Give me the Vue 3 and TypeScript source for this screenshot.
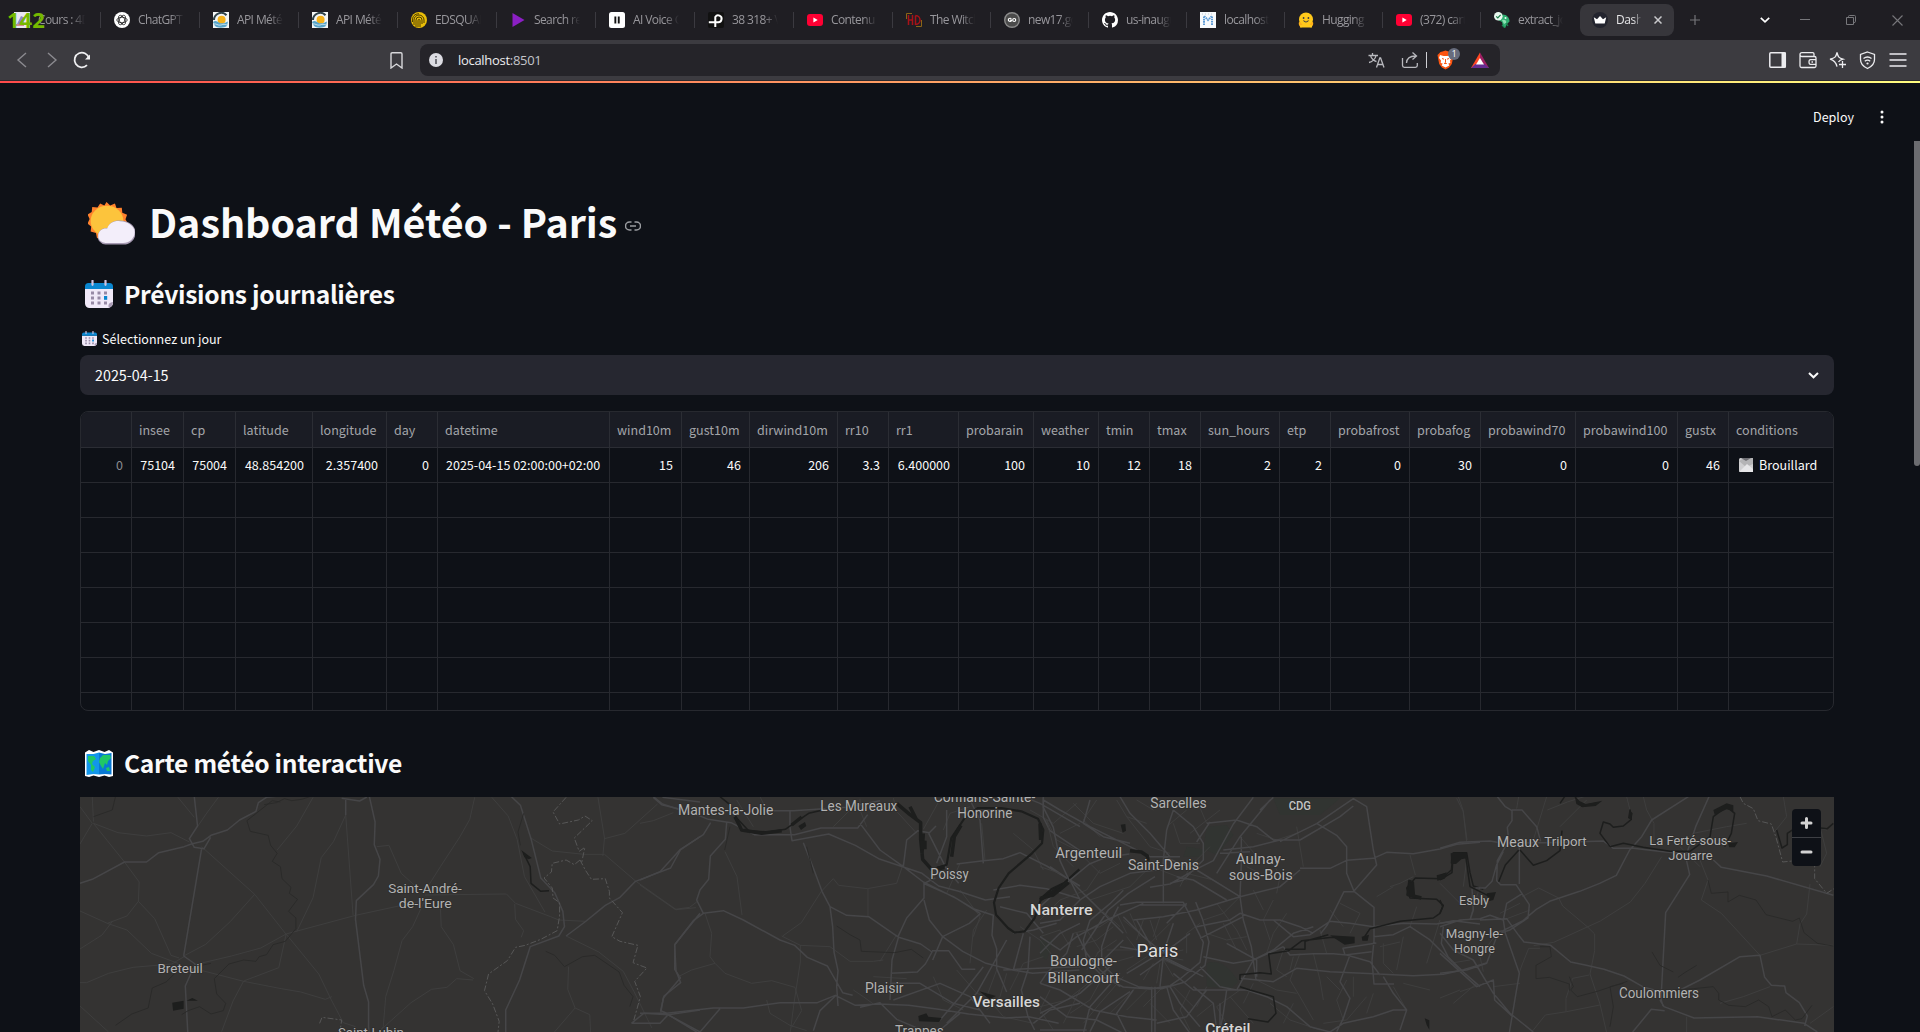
<script setup lang="ts">
interface Tab { icon: string; label: string; w: number }
const tabs: Tab[] = [
  { icon: 'cours', label: 'Cours : 4D', w: 101 },
  { icon: 'gpt', label: 'ChatGPT - ', w: 99 },
  { icon: 'meteo', label: 'API Météo', w: 99 },
  { icon: 'meteo', label: 'API Météo', w: 99 },
  { icon: 'eds', label: 'EDSQUARE', w: 99 },
  { icon: 'play', label: 'Search res', w: 99 },
  { icon: 'eleven', label: 'AI Voice G', w: 99 },
  { icon: 'pexels', label: '38 318+ Vi', w: 99 },
  { icon: 'yt', label: 'Contenu d', w: 99 },
  { icon: 'hd', label: 'The Witche', w: 98 },
  { icon: 'go', label: 'new17.go', w: 98 },
  { icon: 'github', label: 'us-inaugu', w: 98 },
  { icon: 'm', label: 'localhost', w: 98 },
  { icon: 'hug', label: 'Hugging F', w: 98 },
  { icon: 'yt', label: '(372) cart', w: 98 },
  { icon: 'parrot', label: 'extract_jo', w: 98 },
]

interface Col { name: string; value: string; w: number }
const cols: Col[] = [
  { name: '', value: '0', w: 51 },
  { name: 'insee', value: '75104', w: 52 },
  { name: 'cp', value: '75004', w: 52 },
  { name: 'latitude', value: '48.854200', w: 77 },
  { name: 'longitude', value: '2.357400', w: 74 },
  { name: 'day', value: '0', w: 51 },
  { name: 'datetime', value: '2025-04-15 02:00:00+02:00', w: 172 },
  { name: 'wind10m', value: '15', w: 72 },
  { name: 'gust10m', value: '46', w: 68 },
  { name: 'dirwind10m', value: '206', w: 88 },
  { name: 'rr10', value: '3.3', w: 51 },
  { name: 'rr1', value: '6.400000', w: 70 },
  { name: 'probarain', value: '100', w: 75 },
  { name: 'weather', value: '10', w: 65 },
  { name: 'tmin', value: '12', w: 51 },
  { name: 'tmax', value: '18', w: 51 },
  { name: 'sun_hours', value: '2', w: 79 },
  { name: 'etp', value: '2', w: 51 },
  { name: 'probafrost', value: '0', w: 79 },
  { name: 'probafog', value: '30', w: 71 },
  { name: 'probawind70', value: '0', w: 95 },
  { name: 'probawind100', value: '0', w: 102 },
  { name: 'gustx', value: '46', w: 51 },
  { name: 'conditions', value: 'Brouillard', w: 104 },
]
const emptyRows = 7

interface Place { t: string; x: number; y: number; w: number; k?: string }
const places: Place[] = [
  { t: 'Saint-André-', x: 388.2, y: 893.3, w: 73.5, k: 'small' },
  { t: "de-l'Eure", x: 398.8, y: 907.7, w: 53, k: 'small' },
  { t: 'Breteuil', x: 157.5, y: 972.7, w: 45.4, k: 'small' },
  { t: 'Saint-Lubin', x: 338, y: 1036.5, w: 65.7, k: 'small' },
  { t: 'Mantes-la-Jolie', x: 678, y: 814.7, w: 95.3 },
  { t: 'Les Mureaux', x: 820.3, y: 811, w: 77 },
  { t: 'Conflans-Sainte-', x: 933.7, y: 802, w: 101.6 },
  { t: 'Honorine', x: 957.3, y: 817.7, w: 55 },
  { t: 'Poissy', x: 930.3, y: 879, w: 38.4 },
  { t: 'Argenteuil', x: 1055.2, y: 858, w: 67 },
  { t: 'Nanterre', x: 1030, y: 915, w: 62.7, k: 'strong' },
  { t: 'Boulogne-', x: 1050, y: 965.7, w: 67 },
  { t: 'Billancourt', x: 1047.5, y: 982.7, w: 72 },
  { t: 'Plaisir', x: 865, y: 992.7, w: 38.6 },
  { t: 'Versailles', x: 972.5, y: 1007.3, w: 67.3, k: 'strong' },
  { t: 'Trappes', x: 895, y: 1035.5, w: 48.7 },
  { t: 'Créteil', x: 1205.2, y: 1034, w: 45.3, k: 'strong' },
  { t: 'Sarcelles', x: 1150.3, y: 807.7, w: 56.4 },
  { t: 'CDG', x: 1288.7, y: 810.3, w: 22.3, k: 'code' },
  { t: 'Saint-Denis', x: 1128, y: 870.3, w: 71 },
  { t: 'Aulnay-', x: 1235.7, y: 863.7, w: 49.3 },
  { t: 'sous-Bois', x: 1228.7, y: 880.3, w: 64 },
  { t: 'Paris', x: 1136.4, y: 956.5, w: 42, k: 'capital' },
  { t: 'Meaux', x: 1497, y: 846.7, w: 41.9 },
  { t: 'Trilport', x: 1544.3, y: 846, w: 42.4, k: 'small' },
  { t: 'La Ferté-sous-', x: 1649.3, y: 845.3, w: 81.7, k: 'small' },
  { t: 'Jouarre', x: 1668.3, y: 860, w: 44.4, k: 'small' },
  { t: 'Esbly', x: 1459, y: 905, w: 30, k: 'small' },
  { t: 'Magny-le-', x: 1445.7, y: 938.3, w: 57.3, k: 'small' },
  { t: 'Hongre', x: 1454, y: 952.5, w: 41, k: 'small' },
  { t: 'Coulommiers', x: 1619, y: 998, w: 80 },
]
</script>

<template>
  <div class="window">
    <svg class="defs" width="0" height="0" aria-hidden="true">
      <symbol id="fav-cours" viewBox="0 0 16 16"><rect width="16" height="16" fill="#e9e6f3" /><path d="M3 12 7 4l4 2-2 7z" fill="#8f86c9" /><path d="M2 13h8" stroke="#c0392b" stroke-width="1" /></symbol>
      <symbol id="fav-gpt" viewBox="0 0 16 16"><circle cx="8" cy="8" r="8" fill="#fff" /><g fill="none" stroke="#222" stroke-width=".8"><ellipse cx="8" cy="8" rx="5.200" ry="2.700" /><ellipse cx="8" cy="8" rx="5.200" ry="2.700" transform="rotate(60 8 8)" /><ellipse cx="8" cy="8" rx="5.200" ry="2.700" transform="rotate(120 8 8)" /></g></symbol>
      <symbol id="fav-meteo" viewBox="0 0 16 16"><rect width="16" height="16" fill="#f4f6f5" /><path d="M1 8A7.2 7.2 0 0 1 13.5 3.2" fill="none" stroke="#30434a" stroke-width="2" /><circle cx="8.6" cy="7.8" r="4" fill="#f6b21b" /><path d="M0 10c2-2 4-1 6 .5s5 1 9-1L14 14c-3 2-9 2.500-12 0z" fill="#58a4c8" /><path d="M0 12c3-1 5 2 8 1s3-1 6 0" stroke="#d8ecf4" stroke-width=".8" fill="none" /></symbol>
      <symbol id="fav-eds" viewBox="0 0 16 16"><circle cx="8" cy="8" r="8" fill="#e9be08" /><g fill="none" stroke="#4a3b00" stroke-width="1"><path d="M3 13V8a5 5 0 0 1 10 0v3M5 15V8a3 3 0 0 1 6 0v4M7 15V8.500a1 1 0 0 1 2 0V15M1.500 10C.8 4 4 1.800 8 1.800" /></g></symbol>
      <symbol id="fav-play" viewBox="0 0 16 16"><path d="M2.500 1 14.500 8 2.500 15z" fill="#8b1fc4" /></symbol>
      <symbol id="fav-eleven" viewBox="0 0 16 16"><rect width="16" height="16" rx="2.500" fill="#fff" /><path d="M5.400 4.500h1.900v7H5.400zM8.800 4.500h1.900v7H8.800z" fill="#111" /></symbol>
      <symbol id="fav-pexels" viewBox="0 0 16 16"><rect width="16" height="16" rx="2" fill="#111" /><path d="M7.300 15V5a3.400 3.400 0 1 1 2.500 5.200H.8" fill="none" stroke="#fff" stroke-width="2" /></symbol>
      <symbol id="fav-yt" viewBox="0 0 16 16"><rect y="2" width="16" height="12" rx="3" fill="#ff0033" /><path d="m6.400 5.600 4.300 2.400-4.300 2.400z" fill="#fff" /></symbol>
      <symbol id="fav-hd" viewBox="0 0 16 16"><path d="M.5 7V1.500H6M15.500 8v6.500H10" fill="none" stroke="#8c6416" stroke-width="1" /><path d="M2.500 3v10M6.500 3v10M2.500 8h4M9.500 3.500v9.500M9.500 3.500c6 0 6 9 0 9" fill="none" stroke="#a81218" stroke-width="1.500" /></symbol>
      <symbol id="fav-go" viewBox="0 0 16 16"><circle cx="8" cy="8" r="8" fill="#8c8c8c" /><circle cx="8" cy="8" r="6.600" fill="#4b4b4b" /><g fill="none" stroke="#fff" stroke-width="1.200"><path d="M7.300 6.900A1.600 1.600 0 1 0 7.400 8.600V8.200H6.200" /><circle cx="10.200" cy="8" r="1.500" /></g></symbol>
      <symbol id="fav-github" viewBox="0 0 16 16"><path fill="#fff" d="M8 0C3.580 0 0 3.580 0 8c0 3.540 2.290 6.530 5.470 7.590.4.070.55-.17.55-.38 0-.19-.01-.82-.01-1.490-2.010.37-2.530-.49-2.690-.94-.09-.23-.48-.94-.82-1.130-.28-.15-.68-.52-.01-.53.63-.01 1.080.58 1.230.82.72 1.210 1.870.87 2.330.66.07-.52.28-.87.51-1.070-1.780-.2-3.640-.89-3.640-3.950 0-.87.31-1.590.82-2.150-.08-.2-.36-1.020.08-2.120 0 0 .67-.21 2.200.82a7.600 7.600 0 0 1 4 0c1.530-1.040 2.200-.82 2.200-.82.44 1.100.16 1.920.08 2.120.51.56.82 1.270.82 2.150 0 3.070-1.870 3.750-3.650 3.950.29.25.54.73.54 1.480 0 1.070-.01 1.930-.01 2.200 0 .21.15.46.55.38A8 8 0 0 0 16 8c0-4.420-3.580-8-8-8z" /></symbol>
      <symbol id="fav-m" viewBox="0 0 16 16"><rect width="16" height="16" fill="#f8fafc" /><path d="M4 13V4l4 4 4-4v9" fill="none" stroke="#5d9bd6" stroke-width="2" stroke-dasharray="1.600 .7" /><path d="M2 2h12" stroke="#c3ccd6" stroke-dasharray="1 2" /></symbol>
      <symbol id="fav-hug" viewBox="0 0 16 16"><circle cx="8" cy="7.500" r="7" fill="#ffc91b" /><path d="M1 10c2 0 3 2 4 4.500L3 15.500C1 14 .3 12 1 10zM15 10c-2 0-3 2-4 4.500l2 1c2-1.500 2.700-3.500 2-5.500z" fill="#ffb01a" /><path d="M2 13h12v2.500H2z" fill="#ffc91b" /><circle cx="5.600" cy="6" r=".9" fill="#3a3b45" /><circle cx="10.400" cy="6" r=".9" fill="#3a3b45" /><path d="M5.500 8.500q2.500 3 5 0" fill="none" stroke="#3a3b45" stroke-width="1.100" /></symbol>
      <symbol id="fav-parrot" viewBox="0 0 16 16"><path d="M6 3c5-2 10 2 9.500 6.500L13 12l-2 4-2-2-1-4-4-2z" fill="#2fae71" /><path d="M8 8c3-1 5 1 4 3l-2 1z" fill="#8ce0b3" /><circle cx="11.500" cy="6" r="1" fill="#eafff3" /><path d="m8 13 3 3M12 11l2 3" stroke="#1d8a55" stroke-width="1.200" /><circle cx="4.300" cy="4.300" r="4.300" fill="#e8f8ef" /><path d="m2.200 4.400 1.600 1.500 2.800-3" fill="none" stroke="#1b7a47" stroke-width="1.300" /></symbol>
      <symbol id="calendar" viewBox="0 0 28 28"><path d="M0 9h28v14a5 5 0 0 1-1 3l-3 2H4.500A4.500 4.500 0 0 1 0 23.500z" fill="#f0e9f8" /><path d="M24 28c-1.500-3 0-5.500 4-6-.3 3-1.500 5-4 6z" fill="#a99bb5" /><path d="M0 9V6.500A3.500 3.500 0 0 1 3.500 3h21A3.500 3.500 0 0 1 28 6.500V9z" fill="#0a86cf" /><path d="M7.500.8v4M20.500.8v4" stroke="#d0c3df" stroke-width="2.200" stroke-linecap="round" /><g fill="#978aa6"><path d="M6 11.500h3v3H6zM12.500 11.500h3v3h-3zM19 11.500h3v3h-3zM6 16.500h3v3H6zM12.500 16.500h3v3h-3zM6 21.500h3v3H6zM12.500 21.500h3v3h-3zM19 21.500h3v3h-3z" /></g><path d="M19 16h3.200v3.800H19z" fill="#0a86cf" /></symbol>
      <linearGradient id="bat" x1="0" y1="0" x2="1" y2="0"><stop offset=".5" stop-color="#ff4724" /><stop offset=".5" stop-color="#9e1f63" /></linearGradient>
    </svg>

    <header class="tabbar">
      <div v-for="(t, i) in tabs" :key="i" class="tab" :style="{ width: t.w + 'px' }">
        <svg class="fav"><use :href="'#fav-' + t.icon" /></svg>
        <span class="tab-label">{{ t.label }}</span>
      </div>
      <div class="tab active">
        <svg class="fav" viewBox="0 0 16 16"><circle cx="8" cy="8" r="8" fill="#23242e" /><path d="m1.800 5.200 3.200 2L8 4l3 3.200 3.200-2-1.500 6.300H3.300z" fill="#fff" /></svg>
        <span class="tab-label">Dashb</span>
        <svg class="x" viewBox="0 0 8 8"><path d="m.5.5 7 7m0-7-7 7" stroke="#c9c9cc" stroke-width="1.500" /></svg>
      </div>
      <svg class="plus" viewBox="0 0 10 10"><path d="M5 0v10M0 5h10" stroke="#747478" stroke-width="1.200" /></svg>
      <div class="winctl">
        <svg class="more" width="10" height="6" viewBox="0 0 10 6"><path d="m.8.800 4.200 4 4.200-4" fill="none" stroke="#fff" stroke-width="1.700" /></svg>
        <svg width="10" height="10" viewBox="0 0 10 10"><path d="M0 4.500h10" stroke="#77777b" /></svg>
        <svg width="10" height="10" viewBox="0 0 10 10"><path d="M.5 2.500h7v7h-7zM2.500 2.200V1.500q0-1 1-1h5q1 0 1 1v5q0 1-1.500 1" fill="none" stroke="#77777b" /></svg>
        <svg width="11" height="11" viewBox="0 0 11 11"><path d="m.5.5 10 10m0-10-10 10" stroke="#77777b" stroke-width="1.100" /></svg>
      </div>
      <span class="fps">142</span>
    </header>

    <nav class="toolbar">
      <svg class="nav-l" width="90" height="20" viewBox="0 0 90 20" fill="none">
        <path d="M26 3l-8 7 8 7" stroke="#8b8a8f" stroke-width="1.400" />
        <path d="m48 3 8 7-8 7" stroke="#8b8a8f" stroke-width="1.400" />
        <path d="M87 15.200A7.300 7.300 0 1 1 89 8.500" stroke="#f0f0f2" stroke-width="1.800" />
        <path d="M90 4.500v5h-5z" fill="#f0f0f2" />
      </svg>
      <svg class="bookmark" width="13" height="17" viewBox="0 0 13 17"><path d="M1 2q0-1.200 1.200-1.200h8.600Q12 .8 12 2v14l-5.500-4L1 16z" fill="none" stroke="#d8d8db" stroke-width="1.400" /></svg>
      <div class="address">
        <svg class="info" width="14" height="14" viewBox="0 0 14 14"><circle cx="7" cy="7" r="7" fill="#dcdce2" /><path d="M6.200 3h1.600v1.600H6.200zM6.200 6h1.600v5H6.200z" fill="#55555c" /></svg>
        <span class="url">localhost<i>:8501</i></span>
        <svg class="addr-icons" width="132" height="24" viewBox="0 0 132 24" fill="none" stroke-width="1.300">
          <g stroke="#b9b9be"><path d="M4.500 5v2.500M.5 7.500h9.500M2.500 7.500c.5 3 4 5.500 6 6M8 7.500C7.500 11 4 14 1 14.500M8.500 19.500l3.300-9.500h.8l3.400 9.500M9.700 16.500h5.200" /><path d="M34.500 10v7.500q0 1.800 1.800 1.800h11.200q1.800 0 1.800-1.800V15M38.500 15c.3-4.700 3-7 9-7M44.500 4.500l4 3.500-4 3.500" /></g>
          <path d="M58.500 4v16" stroke="#d0d0d4" stroke-width="1" />
          <path d="m72.500 4 2-.5 3-1 3 1 2 .5 3 3-.7 4-1 5-2.700 3.500-3.600 2-3.600-2-2.700-3.500-1-5-.7-4z" fill="#fb5410" />
          <path d="m72 7 3.500 1h4L83 7l1 3-2 2.500.3 2.500-2 .5 1 2-3.800 2-3.800-2 1-2-2-.5.300-2.500-2-2.500z" fill="#fff" /><path d="m74 10.500 2 .7M81 10.500l-2 .7M77.500 11v3.500l-1.300 1h2.600" stroke="#fb5410" stroke-width="1" />
          <rect x="80" y="0" width="12" height="12" rx="6" fill="#676c7c" /><text x="83.800" y="9.200" fill="#fff" stroke="none" font-size="8.500" font-family="Open Sans, sans-serif">1</text>
          <path d="m112 4.500 9 15.500h-18z" fill="url(#bat)" /><path d="m103 20 4.500-4h9l4.500 4z" fill="#662d91" /><path d="m112 10 4 6.500h-8z" fill="#fff" />
        </svg>
      </div>
      <svg class="nav-r" width="140" height="20" viewBox="0 0 140 20" fill="none" stroke="#ececef" stroke-width="1.500">
        <rect x="1.800" y="2.800" width="15.500" height="14.500" rx="1" /><path d="M13.500 2.500h4.500v15h-4.500z" fill="#ececef" stroke="none" />
        <path d="M46 6.500V4q0-1.300-1.300-1.300H34q-2 0-2 1.900t2 1.900h12.500q1.500 0 1.500 1.500v8q0 1.500-1.500 1.500H33.500Q32 17.500 32 16V4.500M48 9.700h-5.500q-1.500 0-1.500 2.300t1.500 2.300H48" stroke-width="1.300" /><path d="M43.500 12h1.500" />
        <path d="M69 2.500c1 4.300 2 5.700 6 6.700-2 .6-3.500 1.200-4.500 2.800M69 2.500c-1 4.300-2 5.700-7 6.700 4 1 6 3 7 7.500M74.500 11v7M71 14.500h7" stroke-width="1.300" />
        <path d="m99.500 2 7 2.500v5c0 4-2.500 7-7 9-4.500-2-7-5-7-9v-5z" stroke-width="1.300" /><path d="M95.500 8.500q4-3 8 0M96.800 11.200q2.700-2.200 5.400 0" stroke-width="1.300" /><circle cx="99.500" cy="13.500" r="1.100" fill="#ececef" stroke="none" />
        <path d="M121.500 4h17M121.500 10h17M121.500 16h17" stroke-width="1.400" />
      </svg>
    </nav>
    <div class="decoration"></div>

    <main class="page">
      <div class="topbar">
        <span>Deploy</span>
        <svg width="4" height="14" viewBox="0 0 4 14" fill="#fafafa"><circle cx="2" cy="2" r="1.500" /><circle cx="2" cy="7" r="1.500" /><circle cx="2" cy="12" r="1.500" /></svg>
      </div>
      <div class="scroll"></div>

      <h1>
        <svg class="sun" width="47" height="43" viewBox="1.500 0 44.500 43" preserveAspectRatio="none"><path d="M19 0l3.500 3.500L27 1.500l1.500 4.500 5-.2.500 5 4.500 2-1.500 4.500 2 4-20 17-7-1.500-2-.8-1-5-5-1.500.5-5-3.500-3 2-4.500L1 12.500l4-2.500.5-5 5 .5L13 1.500l4 2z" fill="#ff822d" /><ellipse cx="19.500" cy="19" rx="15.500" ry="15.200" fill="#fcc43c" /><path d="M18 42.500a7.500 7.500 0 0 1-7-9c.7-5 4-8 9-7.500 2-6 7-8 12-7.500 8 .5 14.500 5 14.500 12s-5 12-11 12z" fill="#a79bb3" /><path d="M18 41a7 7 0 0 1-6.800-8c.7-4.500 4-7 8.500-6.500 2-6 7-7.800 12-7.300 8 .5 14 5 14 11s-5 10.800-11 10.800z" fill="#f3eefa" /></svg>
        <span>Dashboard Météo - Paris</span>
        <svg class="link" width="16" height="10" viewBox="0 0 16 10" fill="none" stroke="#9b9da1" stroke-width="1.500"><path d="M6.500 1H4.500a3.700 3.700 0 0 0 0 8h2M9.500 1h2a3.700 3.700 0 0 1 0 8h-2M5 5h6" /></svg>
      </h1>
      <h3 class="h-prev">
        <svg width="28" height="28"><use href="#calendar" /></svg>
        <span>Prévisions journalières</span>
      </h3>
      <label class="field">
        <svg width="15" height="15" viewBox="0 0 28 28"><use href="#calendar" width="28" height="28" /></svg>
        <span>Sélectionnez un jour</span>
      </label>
      <div class="select">
        <span>2025-04-15</span>
        <svg width="11" height="7" viewBox="0 0 11 7"><path d="m1 1 4.500 4.300L10 1" fill="none" stroke="#fafafa" stroke-width="2" /></svg>
      </div>

      <div class="table">
        <div class="row head">
          <div v-for="(c, i) in cols" :key="i" class="cell" :style="{ width: c.w + 'px' }">{{ c.name }}</div>
        </div>
        <div class="row data">
          <div v-for="(c, i) in cols" :key="i" class="cell" :class="{ idx: i === 0, txt: c.name === 'conditions' || c.name === 'datetime' }" :style="{ width: c.w + 'px' }">
            <svg v-if="c.name === 'conditions'" width="14" height="14" viewBox="0 0 14 14"><rect width="14" height="14" rx="1.500" fill="#cfcfd1" /><path d="M0 3 5 0h9v6L7 9z" fill="#b4b4b6" /><path d="m2 0 5 3 5-3z" fill="#6f6f74" /><path d="m0 14 8-8 6 5v3z" fill="#e6e6e8" /></svg>
            {{ c.value }}
          </div>
        </div>
        <div v-for="r in emptyRows" :key="r" class="row">
          <div v-for="(c, i) in cols" :key="i" class="cell" :style="{ width: c.w + 'px' }"></div>
        </div>
      </div>

      <h3 class="h-map">
        <svg width="28" height="27" viewBox="0 0 28 27"><path d="M0 2.500 4 0l4.500 2 5.500-2 5.500 2L24 0l4 2.500V26l-4 1-4.500-1.500L14 27l-5.500-1.500L4 27l-4-1z" fill="#fff" /><path d="M1.500 4 8.500 4v20l-7 1zM8.500 4 14 2.500v22L8.500 24z" fill="#1296ea" /><path d="M14 2.500 20 4v20l-6 .5zM20 4l6.500-1v21.500L20 24z" fill="#0879d4" /><path d="M3 6h6l2 3-3 2-1 3 3 3-2 5-2-2v-5L3 11zM15 8l3-3h7l1 3-3 3-1 4-2-2-2 6-2-3-2-4zM21 18l3-1 1 4h-3z" fill="#1fc766" /></svg>
        <span>Carte météo interactive</span>
      </h3>

      <div class="map">
        <svg class="tiles" viewBox="80 797 1754 235" fill="none">
          <g class="parks" transform="translate(1040 790) scale(.33333)">
            <path d="M500 520q50-20 95 55l-20 20-75-5zM500 110l60-5 20 30-50 60-40-20zM700 25h200l-60 50h-120zM440 170l60 10-20 20h-50zM0 450l40 0-20 60-20-10z" />
          </g>
          <g class="west" transform="translate(60 680) scale(.40816 .33333)">
            <g class="minor">
              <path d="M49 380l30 50-30 62M79 350l3 75M82 430l60 28 70 10 60-10 45 28M82 430l34 52 42 64M158 546l36 60-2 58-28 44-48 22-67-37M192 664l40 52 40 110 20 8M116 730l48 20 60 70 65 30M49 807l54-42 26-42M49 908h16l54-28 60-18 95-10 30-22M289 352l40 60M388 352l-30 50-20 36M347 500l130 143 77 120M477 643l-60 82-60 68-54 35M330 854l90-26 72-24 62-42M554 762l40 60 40 60 30 76M554 762l170-56 170-45M664 958l30 70 30 12M450 903l86-40 18-100M330 866l120 38 92 22 48 10 60 22 16-8M450 903l-26 60-28 92M49 978l70 78M620 352l-40 86-48 72M700 405l-30 80-30 48-20 120-40 102M700 405l18 300M776 500l30-4 30 84 40 44M1016 352l-12 66-24 52-48 90-34 66M894 645l200-3 22 28 86 40M894 660l-30 80-26 42-20 90-20 78-6 90-28 50M932 680l2 60 30 54 16 78 34 24M780 1056l80-88 50-40 38-6 24-26 40 4M1058 352l40 56 22 70 18 112 50 106M1318 352l16 122-4 54M1334 476l50-16 80-88M1152 473l54 40 78 10 50 0 76 80M1410 603l100 86 48-6M1240 768l80 48 60 58 26 60 44 110M1246 860l-2 68 18 56-52 74M1262 984l36 20 2 52M1114 672l2 46 20 34-6 20M1202 710l20 10 66 4"/>
            </g>
            <g class="major">
              <path d="M49 610l30-12 79-52h54l30-28 62-18 18-8 28-8 20-18 40-16 30-30 40-26 6-26 20-16 30-4M329 350l8 88-20 38 12 26 24 4 16-34M347 506l-44 322M303 828l28 24-24 66 6 138M690 355l44 8 18-12M700 360v45M758 350l14 76-2 68 14 44-4 50-12 26-42 48-2 56 20 198 12 50v74l4 50M1106 350l22 26 26 100 24 118 34 44 20 56 4 46-14 28-70 32-26 100-34 90v68M1568 470l-48 40-24 54-86 40-38 48-36 24-50 50-46 42M1568 700l-62 94v74l14 26-42 60-6 44M1568 990l-78 14-60-4-30 30M1490 1004l-20 26h-70M1490 1004l70 52M1454 350l22 22 80 32M1476 352l92 14"/>
            </g>
            <g class="stream">
              <path d="M540 366l-20-4-62 60 8 32 44 12 6 30 16 24-12 24 20 16 4 36 22 26-4 18 20 18-22 36 18 20 0 32-26 38-30 10-16 30-18 6-8 14-30-4-36 12-36 44 6 46 22 28-6 22-30 10-28-22-28 12-16 12M370 850l-80 20-30 36-34 18-10 60-40 18-40 34M136 350l-8 40-46 20M1190 814l22 12 24 34 44-30 30-4 60 50 12 40 22 34-8 30M1136 400l-14 56 6 40"/>
              <path class="bank" d="M500 374l30-6 20-12 18 6 24-4 20-8"/>
            </g>
            <g class="limit"><path d="M1240 352l-16 22-16 22 16 36 46-12 16-12 18 14-44 52 12 40 14-12-8 46M1274 540l-14 14-20-14-34 10-2 26-18 18 20 30 2 30 16 14 0 40-6 44-40 26-38 18-24 6-20 40-46 40-10 50 20 40 16 52-4 44M1274 540l14 32 14 26 34-2 10 38 0 20 32 44-26 72 20 14 44 12-12 52 34 16-30 40 14 46-16 70M636 1030l6-18 48 8-4 36"/></g>
            <path class="waterfill" d="M1130 510l26 24-8 4-10-6zM275 968l28-6 0 24-26 6zM310 962l14-8 14 8-12 0z"/>
            <path class="water" d="M1136 520l16 40 2 50 24 24 20-2"/>
          </g>
          <g transform="translate(640 790) scale(.33333)">
            <g class="minor">
              <path d="M0 100l40-8 60-24M0 285l105 73 44-6 26-20M255 185l36 75 15 115M195 370l20 60-5 70 15 20-70 20-40 20M225 520l30 30 80 30 60-8 70 20 20 70-30 50M425 438l56 28v50l-20 130-10 80M428 438l56-40 60-94 36-38 16 20 86 10 88-16 20-60M684 296v84M480 466l90 4 60 44h70l30-4M720 514l50-80M640 600l30 20 30 22M380 630l10 40 60 36 50 16M700 560l100 6M960 300l60 80-20 60M960 220l-40 90M830 130l-60-66-10-40M900 28l-50 90M910 120l20-50 60-20M1040 360l-40 60-10 100M1070 540l-30 80 50 60 90 20M1210 500l-60 20-40 80M1120 130l60 50 30 60M1220 90l30 60 60 30M1170 60l70 40 70-60M950 540l60 70 60 20M880 560l30 70 60 30M1230 600l-30 60 40 60M1140 410l60 40 40 50M1200 440l60-20 30 50M1100 550l-20 70-40 40M290 30l50 80M360 20l20 40M680 110l-20-50 0-34M1025 100l10 110M580 110l50-50"/>
            </g>
            <g class="major">
              <path d="M40 22l25 22 80 20 60 24 68 10 70 36h120l80-20h110l30-40M0 270l60-25 60-66 70-45 22-36M260 98l-4 50-45 50-5 70-26 32-10 30 20 40 60-8 60 28 110 60 44 16 38 36 60 26 46 80 30 8M190 370l-30 22-56 72 4 78 14 36-50 40-10 44 30 12M0 670h80l140-16h90l110-16 112 0 54-22 60 30 70-4 90 4 90 12 90 14 110 12 70-4 90 20M80 672l100 54M180 726l60-70M586 618l-46 44-20 60M660 652l60-14 50 50 90 38M380 62h80l160-10 100-20M450 62v50l6 40 110-20 80 34 70 40 130 44 50 38 60 16 80 26 74-10M490 158l30 76 26 70 24 46 8 60 4 76 12 56-4 46 4 60M570 350l50 26 66 4 90 62 66 20 34 24-20 36-24 24-80 4M776 440l-20 70-6 120M774 440l26-56 52-60V280l34-16M852 330l16 60 40 50-30 70M908 440l80-40 34-30M908 440l60 44 70 36 80 20 60 10 140-10M876 482l50 0 40 56h40M660 100l60 80 70 50 60 46 100 50 70 44M790 230l10-80 34-28 34 6 20-20M866 130l50 100 40 50M920 60l0 80-30 80M950 222l80-10 60-6 50-18 80 40 100 60M990 30l30 60 10 130M1210 22v60l20 40 90 60M1150 20l50 20 120 70M850 280l90 40 60 36 60 20-4 60 14 40 0 60 30 70M1060 300l80-14 80 10 100 30M1080 350l80 20 50 60M1120 430l60-10 70-20M1150 430l-30 110M1170 440l-6 100-20 60 20 80 20 40M1320 530l-110 4-120 6M1320 400l-60 30-60 60M760 630l140-50 90 40 60 80M750 580l90 0 100 60 80 20M900 690l60-70 70-90M920 700l90-90 90-160M900 720l60-50M1290 270l30 60M1290 270l-60-40M1180 700l50-40 90-20"/>
            </g>
            <g class="stream"><path d="M590 408l40 26 30 16 4 34 100 4 50-10 36 26M270 110l-16 70M500 170l20 80"/></g>
            <path class="water" d="M240 20l30 24 20 40 36 38 60 4 50-8 20-14 50-34 60-14" />
            <path class="water wide" d="M285 80l20 40 60 10 60-8M455 105l30-24M770 40l40 34 32 24v50l6 60 30 34M850 130l-4 60M810 50l20 40"/>
            <path class="water mid" d="M880 238l40-14 14-80 40-60 40-30h70l60 10 50 22 16 34-4 40-30 30-70 60-30 44-14 44 6 36 36 40 20 14 30-4 30-40 20-60 30-26 40-20 44-40"/>
            <path class="water wide" d="M935 200l8-60 20-34M1200 330l84-54"/>
            <path class="waterfill" d="M475 108l20-12 4 12-16 12zM835 678l24-8 6 10 40 4-8 12-60-2zM890 230l24-6 0 14-20 4zM840 150l20 2v26h-18zM1018 604l50 14-20 10z"/>
          </g>
          <g transform="translate(1040 790) scale(.33333)">
            <g class="minor">
              <path d="M100 40l60 60 90 30M170 30l-40 60 50 50M230 30l30 50 60 20M260 80l70 90 60 20M400 100l20 60 60 0M440 60l-60 50M340 60l-50-30M470 30l30 70M540 60l-90 70M20 90l20 80 60 60M60 130l60-30M120 190l60 60 60-30M0 230l60 20M180 240l-40 60-80 30-60 60M90 270l60 60 90 80M150 330l120-40 70-70M380 190l-20 50 80 30M420 290l30-60 60-60M440 250l80 20 80 50M600 320l-50 50-60 20M480 400l-40 30 0 60M530 340l60 80 30 60M550 400l40 80M500 430l60 20 60-10M690 200l30 60-10 50M640 300l30 60M650 130l60 20 60-20M600 140l60 70M770 110l20 120M620 230l40 20M700 330l-30 60 20 60M740 370l-40 60-20 60M900 340l60 30-30 60M870 360l40 50M840 420l20 70M1250 25l20 40 10 92M1110 195l16 60M1050 290l30-10 40-20M1010 320l50-30M1130 350l-20 60M1200 390l-40 130M1020 470l60-14M1030 460l0 60 30 30M1090 440l-20 100M730 480l-20 60 30 20M760 500l-10 40M780 490l-30 80 30 50 40 70M820 490l20 80 10 60M650 570l60 30 60 10M600 600l-70 50 40 70M570 620l70 80M640 580l-30 60M500 590l-30 60M520 640l-50 40M450 600l-30 60 30 60M400 590l60 60M370 590l-60 60M320 600l-60 60M290 590l-80 80M330 640l60 60M250 560l-70 80-50 60M200 540l-50 90-60 40M170 560l-90 70-80 20M120 600l-50 100M140 420l40 60-40 60M100 430l80-20 60-40M110 470l60-20 50-40M170 490l60-40M230 370l30 60M250 390l60 50M270 370l30 70M310 390l-20 60M330 390l20 60M360 380l-20 60M390 400l-60 60M440 440l-60 40M430 480l-50 10M430 510l-60-10M440 540l-70-30M400 560l-30-50M350 580l10-60M310 570l30-50M260 540l60-40M210 520l70-20M200 480l80 0M260 440l30 40M920 570l-30 60 20 60M860 560l40 40M940 560v60M760 640l-30 60M690 640l60 50 90 30M850 700l70-10 60-70M1000 610l-20 60M1060 590l40 70M1170 600l-80-20M1310 580l-70 60"/>
            </g>
            <g class="major">
              <path d="M10 22v30l30 60 20 100 28 60M10 30l50 30 90 50 60 30 60 30 60 30 90 0M150 30l-20 70 60 40 80 20M270 70l-30-50M270 70l60 60 60 70M400 60l-20 60-10 90M400 60l60 50 30 50 0 50-60 60-40 10M500 100l90-10 60 20 50 40 80 0 120-70 40-32M510 96l-40 60M640 22l-60 80-60 110-60 30-70 40-60 10M690 30l-90 110-70 110M660 60l40-38M830 100l60 36 30 34v80l22 54 60 48v100l-6 60 6 70 60 0M942 305l-30 0-50 100-20 26M720 155l110-54 110-75 40 24 20 130 10 45-70 80M540 190l90-5M550 180l90-10 80-20M780 235h90l50-24 80-6 40-18 80 4 80-14 50-14 70-6M600 320l4-100 0-80M600 320l120-30 60-50M600 320l10 70 24 80 14 100M600 320l-130 40-100 20-90 10M370 200l100 40 130 80M370 210v130M345 260l-80 50-60 50-40 60-40 60M410 260l50 10 100 60M88 272l60-50 50-20 70-10M0 350l90-80 60 60 100 100M0 400l60-10 60-60 60-40 90-40 80-10M240 345l50-8 140 0 30 60 30 60-10 60-60 50-30 20-60 10-80-6-60-30-50-50-10-60 20-60 60-50 40-40M235 350l-30 60-20 60 0 50 40 40 70 30 70 6 70-20 60-50 12-70-20-70-20-50M300 345l140 0M470 410l100-20 30-20 60 20 60 0 60 20 40 20M480 445l80-40 50-25M700 390l60 50 50-6 60-40 60 6 70 10M1000 410l90-10 100 2 50-10 80 10M1000 440l60-6 50-24 60 40 70 70 80 70M490 500l90 20 60-10 60-30 60-50 60-20M560 460l90 50 0 50M480 530l60 60 50 10 50-90 90-40M730 470l20 25 70-4 60 0 40 4 70 20 30 40M600 565l100 10 70-40 100 10 130 6 120 6 90-4 60-14 70-20M995 485l-80 10-6-20 0 0 100-16M900 575l30-80M900 575l30 50-20 60-20 40M1030 560l30 50 40 50-20 60M1100 660l-40 0-60 20-90 20-40 26M400 550l60 50 100 0 60 0 60 20 60 30 70 60 60 16M460 590l60 50 10 80M540 640v84M560 600l-10 70-10 50M345 590v140M335 590v140M380 590l20 70 50 70M390 590l30 50 60 70M240 550l-90 100-20 80M210 530l-90 80-120 60M110 430l30 60 40 50 60 50M100 430l-20 60-60 60-20 30M280 600l-50 70 30 60M0 440l60 40 50-40 90-50 110-50M0 580l60 20 100 60 100 20 90 10M0 620l80 60 90 10 80 40M0 720h140M150 725l30-60 90-60M500 600l-60 80-90 20M250 380l60 60 60 50M440 340l-60 60M250 450l-60 60M300 555l70-50 80 40M370 500l120 60M370 500l-10 90M370 490l80-60M370 490l30-90M360 490l-100 60M350 490l-110-20M340 480l-50-90"/>
            </g>
            <path class="water" d="M600 590l30 10 70 20 8 50-24 26-60-10M600 570l0-16 60-6 34 4-8-60 60-10 40-30 90-10 60 4M735 478h60v-24l70-20M970 446l20-30 90-22 100-10 20-14 10-24-20-18-80-4-10-30 26-30 80 2 30-18 4-60 40 0 10 60 10 40 30 10"/>
            <path class="water wide" d="M270 182l34 4 18 12 2 14M0 325l40-10 46-38M1110 270l-6 44 40 10M1240 200l30-6M0 100l2 50"/>
            <path class="waterfill" d="M870 436l74 4 0 20-30 4zM965 440l22-6-4 18-16 0zM1106 280l16-6 4 50-18-4zM1190 256l28-8-4 18-22 6zM1234 192l40-6 4 18-18 0-14 16h-14zM242 104l14-2 2 20-10 6zM1154 685l14 6 0 28-8-14z"/>
            <path d="M365 480h10l-5 6z" fill="#3d6fa0" />
          </g>
          <g transform="translate(1440 700) scale(.33333)">
            <g class="minor">
              <path d="M55 290l14 40 12 90M320 290l-40 130M236 290l-6 36M610 290l10 40 22 40 0 60M560 290l10 40M322 330l60-24 50-16M360 380l80-80M665 470l-50 80-44 56-90 57-140 64-60 10M444 682l20 20 0 50-14 70 30 90 20 86M246 590l50-26 60 30 12 24 76 64M300 745l-34 0-20 50-8 22M480 915l-100 20-64 10-40 50M448 825l-50 10-20 60 0 40M780 480l24 60-20 60 60 40 116 126M960 766l110-34 110 4M1070 732l10-60 20-30 10-90M740 950v46M840 910l70-20 80-30M270 630l-80 30M170 700l-50 70 10 45M30 790l60-10M60 875l90-30M60 870l-60 24M160 860l80-10M1000 400l40-50-10-60M1140 380l20 80-20 40M760 400l100-20 60-10M720 440l60 60M120 560l-20 60-10 40M0 550l60 60M70 560l10-80M180 640l60-30M1180 920l-70 50M1060 360l100 30"/>
            </g>
            <g class="major">
              <path d="M0 445l60-18 90-4 30 5 140 0 170-5 30 22 60 0 90 10 60 6 60 0M172 290l24 30 20 12v30l-14 20 4 40-34 60-2 60 12 12 46 0 40 60-4 40-54 36-26 8M216 330l30 0 44 50 12 44M238 440v112M745 290l-110 70-30 50-36 40-40 76-50 24-60 24-90 30-40 24-40 34-60 30-20 4M120 660l80-4 36 50 16 20 80 10 60 50 40 8 60 14 60 20 60 34 40 10M0 680l60-20 60-4 30-10 40 14 6 40 42 120-30 178M0 700l40 50 60 30 60 100 50 60 70 56M0 760l110 100 50-20 4 60 50 46M0 820l80-10 60-20 30-80M10 680l-6 50 20 40 40 40M807 290l-40 90-30 90 12 54-72 114-14 260 6 20M720 870l60-30 120-70 60-4 14 66 20 24 40 2 4 20 40 30 24 40-8 30M820 480l24 22 136 26 200 58M660 900l12 20 90 34 190-4 140 20 40 26M578 996l56-68 40 4M106 564l30 0 20-20 14-50 20-40M0 670l70-10M90 660l10-30-4-64M190 660l10-50 48-30"/>
            </g>
            <g class="stream"><path d="M804 540l10 40 50-4 0 30 34-20 50 14 30 44 80 20 20-10 14 44 40 32 48 8M636 756l24 40 40 20M714 832l20-14 36-22M550 850l-40 10 10 60-10 60M388 830l12 30-8 10 20 20 60-16 90-30M700 870l60-4 60-6 16 20 0 20 30 16 50 4 40-20 30 20 10 30 40-20 30 30 20-4 30-40M300 740l30 0 4 30-46 26 0 40 40-4 60 20 0 20"/></g>
            <g class="limit"><path d="M900 290l10 20 30 16 14 36 40 10 14 40 20 74 96-10 0 60 36 44 22-14"/></g>
            <path class="water" d="M176 545l20-50 40-44M240 450l40 46 40-14 40-30 6-60M360 310l14-20M405 290l20 28 50-10M510 440l-30-40 10-34 20 6 10 10 30-4 24-20-4-30M510 440l40-10 60 12 80 12 60 0 60-44 10-60 40-30 24 20-10 60-20 40M1010 390l16 54 16-10 0-34 30-20M1180 370l-18 16-40-4M0 540l34-30 6-50 36 0 14 100 60 30M0 600l8 20-8 20"/>
            <path class="waterfill" d="M405 292l12 10 20 10 50-10-20 16-40 4-18-10zM820 330l40-20 20 6 0 18-20-6-36 16zM32 460l46-4 6 18-20 4-16 14-14 0zM0 525l20-8-4 16-16 8zM140 580l28-4-8 24-14 4zM864 430l30-4-10 16-16 0zM568 330l10 10-4 20-10-6z"/>
          </g>
          <text v-for="p in places" :key="p.t" :x="p.x" :y="p.y" :textLength="p.w" lengthAdjust="spacingAndGlyphs" class="place" :class="p.k">{{ p.t }}</text>
        </svg>
        <div class="zoom">
          <svg width="29" height="28" viewBox="0 0 29 28"><path d="M14.500 9.500v9M10 14h9" stroke="#d2d2d2" stroke-width="3" stroke-linecap="round" /></svg>
          <svg width="29" height="28" viewBox="0 0 29 28"><path d="M10 14h9" stroke="#d2d2d2" stroke-width="3" stroke-linecap="round" /></svg>
        </div>
      </div>
    </main>
  </div>
</template>

<style>
body { background: #0e1117; overflow: hidden; }
</style>

<style scoped>
.window {
  width: 1920px;
  height: 1032px;
  overflow: hidden;
  display: flex;
  flex-direction: column;
  background: #0e1117;
  color: #fafafa;
  font-family: "Noto Sans CJK JP", "Noto Sans", sans-serif;
}
svg { display: block; flex: none; }
.defs { position: absolute; }
.tabbar {
  position: relative;
  height: 40px;
  flex: none;
  display: flex;
  align-items: center;
  background: #1f1e23;
  font: 12px "Open Sans", "Noto Sans", sans-serif;
  color: #98979c;
}
.tab {
  box-sizing: border-box;
  flex: none;
  height: 16px;
  display: flex;
  align-items: center;
  gap: 8px;
  padding: 0 14px 0 13px;
  border-right: 1px solid #3b3a40;
}
.tab:first-child { padding-left: 14px; }
.tab:nth-child(16) { border-right-color: transparent; }
.fav { width: 16px; height: 16px; }
.tab-label {
  flex: 1;
  min-width: 0;
  overflow: hidden;
  white-space: pre;
  letter-spacing: -.6px;
  line-height: 18px;
  -webkit-mask-image: linear-gradient(90deg, #000 68%, transparent 98%);
  mask-image: linear-gradient(90deg, #000 68%, transparent 98%);
}
.tab.active {
  width: 94px;
  height: 32px;
  margin-left: 1px;
  padding: 0 12px;
  background: #37363b;
  border: 0;
  border-radius: 8px;
  color: #e4e4e6;
}
.tab.active .tab-label { flex: 0 0 26px; letter-spacing: -.4px; }
.x { width: 8px; height: 8px; margin-left: 4px; }
.plus { width: 10px; height: 10px; margin-left: 16px; }
.winctl {
  margin-left: auto;
  padding-right: 17px;
  display: flex;
  align-items: center;
  gap: 36px;
}
.more { margin-right: -6px; }
.fps {
  position: absolute;
  left: 7px;
  top: 5px;
  font: 700 22px/28px "Open Sans", sans-serif;
  color: #76b900;
}
.toolbar {
  height: 40px;
  flex: none;
  display: flex;
  align-items: center;
  background: #3c3b40;
  border-bottom: 1px solid #2b2a2f;
}
.bookmark { margin-left: 300px; }
.address {
  box-sizing: border-box;
  width: 1080px;
  height: 32px;
  margin-left: 17px;
  padding: 0 10px 0 9px;
  display: flex;
  align-items: center;
  border-radius: 8px;
  background: #252429;
}
.url {
  flex: 1;
  margin-left: 15px;
  font: 13px/20px "Open Sans", "Noto Sans", sans-serif;
  letter-spacing: -.3px;
  color: #ededf0;
}
.url i { font-style: normal; color: #c4c4c9; }
.addr-icons { margin-right: -10px; }
.nav-r { margin-left: auto; margin-right: 12px; }
.decoration {
  height: 2px;
  flex: none;
  background: linear-gradient(90deg, #ff4b4b, #fffd80);
}
.page {
  position: relative;
  flex: 1;
  padding: 0 86px 0 80px;
  display: flex;
  flex-direction: column;
}
.topbar {
  height: 68px;
  margin-right: -50px;
  flex: none;
  display: flex;
  justify-content: flex-end;
  align-items: center;
  gap: 26px;
  font-size: 12.540px;
}
.topbar span { margin-top: -2px; }
.topbar svg { margin-top: -1px; }
.scroll {
  position: absolute;
  right: 0;
  top: 58px;
  width: 6px;
  height: 325px;
  background: #6b6c70;
  border-radius: 0 0 3px 3px;
}
h1, h3 { margin: 0; display: flex; align-items: center; white-space: nowrap; flex: none; }
h1 {
  height: 54px;
  margin-top: 45px;
  padding-left: 8px;
  font-size: 39.400px;
  line-height: 54px;
  font-weight: 700;
}
h1 span { margin: -4px 0 0 14px; }
.link { margin-left: 8px; margin-top: 6px; }
h3 {
  height: 36px;
  padding-left: 5px;
  gap: 11px;
  font-size: 24.600px;
  line-height: 36px;
  font-weight: 600;
  letter-spacing: -.29px;
}
h3 span { margin-top: -2px; }
.h-prev { margin-top: 26px; }
.field {
  display: flex;
  align-items: center;
  gap: 5px;
  height: 20px;
  margin-top: 16px;
  padding-left: 2px;
  font-size: 12.540px;
}
.select {
  box-sizing: border-box;
  height: 40px;
  flex: none;
  margin-top: 7px;
  padding: 0 15px 0 15px;
  display: flex;
  align-items: center;
  justify-content: space-between;
  border-radius: 8px;
  background: #262730;
  font-size: 14.330px;
}
.select span { margin-top: -1px; }
.table {
  box-sizing: border-box;
  width: 1754px;
  height: 300px;
  flex: none;
  margin-top: 16px;
  border: 1px solid #27292f;
  border-radius: 8px;
  overflow: hidden;
  font-size: 12.540px;
}
.row { display: flex; height: 35px; }
.cell {
  box-sizing: border-box;
  flex: none;
  padding: 0 8px 0 7px;
  border-right: 1px solid #27292f;
  border-bottom: 1px solid #27292f;
  line-height: 34px;
  white-space: nowrap;
}
.cell:last-child { border-right: 0; }
.head { height: 36px; color: #a3a5a9; }
.head .cell { background: #1a1c24; border-color: #2b2d34; line-height: 36px; }
.data .cell { text-align: right; }
.data .idx { color: #8b8d92; }
.data .txt { text-align: left; display: flex; align-items: center; gap: 6px; padding-left: 8px; }
.data .txt svg { margin-left: 2px; }
.h-map { margin-top: 34px; }
.map {
  position: relative;
  flex: none;
  width: 1754px;
  height: 235px;
  margin-top: 16px;
  background: #343332;
  overflow: hidden;
}
.tiles { width: 1754px; height: 235px; }
.tiles path { vector-effect: non-scaling-stroke; stroke-linejoin: round; }
.parks path { fill: #313431; }
.minor path { stroke: #3f3f3f; stroke-width: .9; }
.major path { stroke: #464648; stroke-width: 1.500; }
.stream path { stroke: #292928; stroke-width: .9; }
.limit path { stroke: #575757; stroke-width: 1; stroke-dasharray: 6 2 2 2; }
.water { stroke: #1d1e1d; stroke-width: 1.500; }
.water.mid { stroke-width: 2.200; }
.water.wide { stroke-width: 3.500; }
.waterfill { fill: #1d1e1d; }
.place {
  font: 14px Roboto, "Noto Sans", sans-serif;
  fill: #b2b2b2;
  stroke: #2e2d2c;
  stroke-width: 1.500px;
  paint-order: stroke;
}
.place.small { font-size: 13px; }
.place.code { font-size: 12px; font-weight: 500; fill: #c4c4c4; }
.place.strong { font-size: 14.500px; font-weight: 500; fill: #d6d6d6; }
.place.capital { font-size: 17.500px; fill: #dedede; }
.zoom {
  position: absolute;
  right: 13px;
  top: 12px;
  width: 29px;
  height: 57px;
  border-radius: 4px;
  background: #0e1117;
  overflow: hidden;
}
.zoom svg + svg { border-top: 1px solid #3d3f44; }
</style>
